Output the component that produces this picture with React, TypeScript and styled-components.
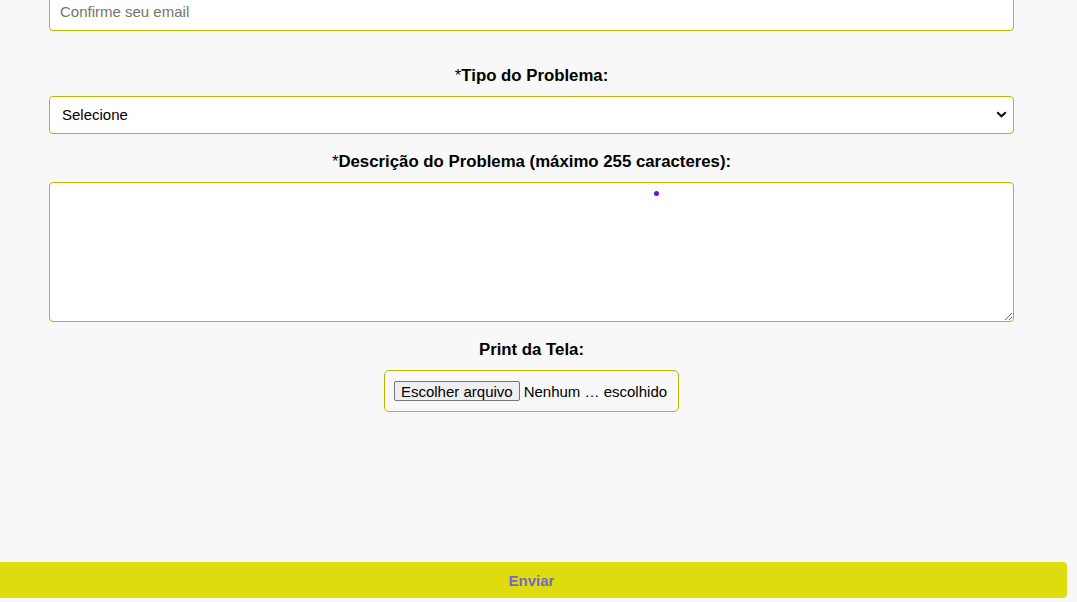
import React from "react";
import styled, { createGlobalStyle } from "styled-components";

const Global = createGlobalStyle`
  html, body { margin: 0; padding: 0; background: #f8f8f8; overflow: hidden; }
  * { box-sizing: border-box; }
`;

const OLIVE = "#bab800";

const Page = styled.div`
  height: 602px;
  width: 1071px;
  margin-left: -4px;
  display: flex;
  flex-direction: column;
  font-family: "Liberation Sans", Arial, sans-serif;
  background: #f8f8f8;
`;

const Form = styled.form`
  display: flex;
  flex-direction: column;
  align-items: center;
  flex: 1;
  margin-top: -7px;
`;

const Group = styled.div<{ $top: number }>`
  width: 965px;
  display: flex;
  flex-direction: column;
  align-items: center;
  margin-top: ${(p) => p.$top}px;
  position: relative;
`;

const Label = styled.label`
  display: block;
  font-size: 16.8px;
  line-height: 18px;
  font-weight: bold;
  color: #000;
  text-align: center;
  margin-bottom: 11px;
`;

const Star = styled.span`
  font-weight: normal;
`;

const TextInput = styled.input`
  width: 965px;
  height: 38px;
  border: 1px solid ${OLIVE};
  border-radius: 4px;
  background: #fff;
  padding: 0 10px 2px;
  font-family: "Liberation Sans", Arial, sans-serif;
  font-size: 15px;
  color: #000;
  outline: none;
  &::placeholder { color: #737373; }
`;

const SelectWrap = styled.div`
  position: relative;
  width: 965px;
`;

const Select = styled.select`
  appearance: none;
  -webkit-appearance: none;
  display: block;
  width: 965px;
  height: 38px;
  border: 1px solid ${OLIVE};
  border-radius: 4px;
  background: #fff;
  padding: 0 30px 1px 12px;
  font-family: "Liberation Sans", Arial, sans-serif;
  font-size: 15px;
  color: #000;
  outline: none;
`;

const Chevron = styled.svg`
  position: absolute;
  right: 7px;
  top: 15px;
  width: 11px;
  height: 7px;
  pointer-events: none;
`;

const TextArea = styled.textarea`
  display: block;
  width: 965px;
  height: 140px;
  border: 1px solid ${OLIVE};
  border-radius: 4px;
  background: #fff;
  padding: 8px 10px;
  font-family: "Liberation Sans", Arial, sans-serif;
  font-size: 15px;
  outline: none;
  resize: vertical;
`;

const Dot = styled.span`
  position: absolute;
  left: 605px;
  top: 38px;
  width: 5px;
  height: 5px;
  border-radius: 50%;
  background: #6a14d6;
  pointer-events: none;
`;

const FileBox = styled.div`
  display: inline-flex;
  align-items: center;
  gap: 4px;
  border: 1px solid ${OLIVE};
  border-radius: 5px;
  padding: 10px 11px 10px 9px;
  font-family: "Liberation Sans", Arial, sans-serif;
  font-size: 15px;
  color: #000;
`;

const FileButton = styled.span`
  display: inline-flex;
  align-items: center;
  height: 20px;
  padding: 0 6px;
  border: 1px solid #767676;
  border-radius: 2px;
  background: #efefef;
  font-size: 15px;
  color: #000;
  white-space: nowrap;
`;

const FileName = styled.span`
  white-space: nowrap;
`;

const Submit = styled.button`
  height: 36px;
  margin-bottom: 4px;
  width: 100%;
  border: none;
  border-radius: 0 4px 4px 0;
  background: #dedc0c;
  color: #7667cf;
  font-family: "Liberation Sans", Arial, sans-serif;
  font-size: 15px;
  font-weight: bold;
  cursor: pointer;
`;

export default function App() {
  return (
    <>
      <Global />
      <Page>
        <Form onSubmit={(e) => e.preventDefault()}>
          <Group $top={0}>
            <TextInput type="email" placeholder="Confirme seu email" />
          </Group>
          <Group $top={36}>
            <Label>
              <Star>*</Star>Tipo do Problema:
            </Label>
            <SelectWrap>
              <Select defaultValue="">
                <option value="">Selecione</option>
              </Select>
              <Chevron viewBox="0 0 11 7">
                <path d="M1.2 1.2 L5.5 5.3 L9.8 1.2" fill="none" stroke="#111" strokeWidth="2" />
              </Chevron>
            </SelectWrap>
          </Group>
          <Group $top={19}>
            <Label>
              <Star>*</Star>Descrição do Problema (máximo 255 caracteres):
            </Label>
            <TextArea maxLength={255} />
            <Dot />
          </Group>
          <Group $top={19}>
            <Label>Print da Tela:</Label>
            <FileBox>
              <FileButton>Escolher arquivo</FileButton>
              <FileName>Nenhum … escolhido</FileName>
            </FileBox>
          </Group>
        </Form>
        <Submit type="submit">Enviar</Submit>
      </Page>
    </>
  );
}
